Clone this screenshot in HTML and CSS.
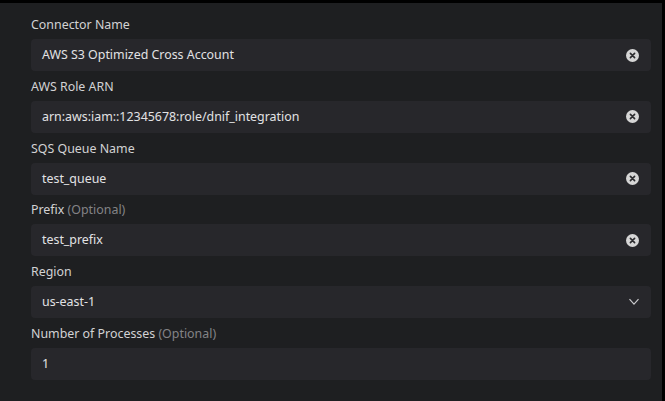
FILE: index.html
```html
<!DOCTYPE html>
<html>
<head>
<meta charset="utf-8">
<link rel="stylesheet" href="styles.css">
</head>
<body>
<div class="panel">
  <div class="field">
    <label class="label">Connector Name</label>
    <div class="input"><span class="value">AWS S3 Optimized Cross Account</span>
      <svg class="clear" width="13" height="13" viewBox="0 0 13 13"><circle cx="6.5" cy="6.5" r="6.5" fill="#d6d6d6"/><path d="M4.4 4.4L8.6 8.6M8.6 4.4L4.4 8.6" stroke="#2b2b2e" stroke-width="1.6" stroke-linecap="round"/></svg>
    </div>
  </div>
  <div class="field">
    <label class="label">AWS Role ARN</label>
    <div class="input"><span class="value">arn:aws:iam::12345678:role/dnif_integration</span>
      <svg class="clear" width="13" height="13" viewBox="0 0 13 13"><circle cx="6.5" cy="6.5" r="6.5" fill="#d6d6d6"/><path d="M4.4 4.4L8.6 8.6M8.6 4.4L4.4 8.6" stroke="#2b2b2e" stroke-width="1.6" stroke-linecap="round"/></svg>
    </div>
  </div>
  <div class="field">
    <label class="label">SQS Queue Name</label>
    <div class="input"><span class="value">test_queue</span>
      <svg class="clear" width="13" height="13" viewBox="0 0 13 13"><circle cx="6.5" cy="6.5" r="6.5" fill="#d6d6d6"/><path d="M4.4 4.4L8.6 8.6M8.6 4.4L4.4 8.6" stroke="#2b2b2e" stroke-width="1.6" stroke-linecap="round"/></svg>
    </div>
  </div>
  <div class="field">
    <label class="label">Prefix <span class="opt">(Optional)</span></label>
    <div class="input"><span class="value">test_prefix</span>
      <svg class="clear" width="13" height="13" viewBox="0 0 13 13"><circle cx="6.5" cy="6.5" r="6.5" fill="#d6d6d6"/><path d="M4.4 4.4L8.6 8.6M8.6 4.4L4.4 8.6" stroke="#2b2b2e" stroke-width="1.6" stroke-linecap="round"/></svg>
    </div>
  </div>
  <div class="field">
    <label class="label">Region</label>
    <div class="input"><span class="value">us-east-1</span>
      <svg class="chev" width="12" height="8" viewBox="0 0 12 8"><path d="M1.5 1.2L6 6.2L10.5 1.2" fill="none" stroke="#c9c9cc" stroke-width="1.2"/></svg>
    </div>
  </div>
  <div class="field">
    <label class="label">Number of Processes <span class="opt">(Optional)</span></label>
    <div class="input"><span class="value">1</span></div>
  </div>
</div>
</body>
</html>
```

FILE: styles.css
```css
html, body {
  margin: 0;
  padding: 0;
  background: #000;
  width: 665px;
  height: 401px;
  overflow: hidden;
}
body {
  padding-top: 3px;
  box-sizing: border-box;
  font-family: "Noto Sans", "Open Sans", sans-serif;
  font-size: 12.4px;
}
.panel {
  width: 662px;
  height: 398px;
  background: #1e1f21;
  box-sizing: border-box;
  padding: 12px 11px 0 31px;
  display: flex;
  flex-direction: column;
  gap: 5.8px;
}
.field {
  display: flex;
  flex-direction: column;
  gap: 4px;
}
.label {
  display: block;
  height: 20px;
  line-height: 20px;
  color: #d2d2d4;
}
.opt {
  color: #838386;
}
.input {
  height: 32px;
  background: #27272b;
  border-radius: 4px;
  display: flex;
  align-items: center;
  padding: 0 12px 0 11px;
  box-sizing: border-box;
}
.value {
  flex: 1;
  color: #e2e2e4;
  line-height: 20px;
}
.clear {
  display: block;
}
.chev {
  display: block;
  margin-right: -1px;
}
```
